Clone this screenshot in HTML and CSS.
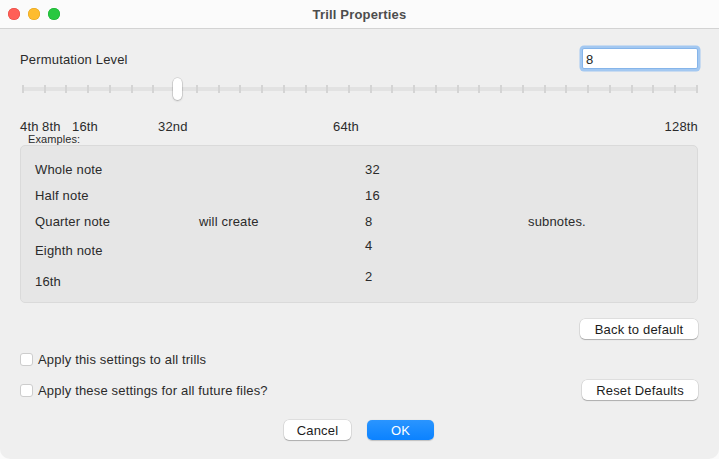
FILE: index.html
```html
<!DOCTYPE html>
<html lang="en">

<head>
    <meta charset="UTF-8">
    <meta name="viewport" content="width=device-width, initial-scale=1.0">
    <title>Trill Properties</title>
    <link rel="stylesheet" href="styles.css">
</head>

<body>
    <div class="window">
        <header class="titlebar">
            <div class="lights">
                <span class="light close"></span>
                <span class="light minimize"></span>
                <span class="light zoom"></span>
            </div>
            <h1 class="title">Trill Properties</h1>
            <div></div>
        </header>

        <main class="content">
            <div class="level-row">
                <span class="label">Permutation Level</span>
                <div class="level-input">8</div>
            </div>

            <!-- slider: 32 steps, value 8 -->
            <div class="slider">
                <div class="track">
                    <span class="tick"></span><span class="tick"></span><span class="tick"></span><span class="tick"></span>
                    <span class="tick"></span><span class="tick"></span><span class="tick"></span><span class="tick"></span>
                    <span class="tick"></span><span class="tick"></span><span class="tick"></span><span class="tick"></span>
                    <span class="tick"></span><span class="tick"></span><span class="tick"></span><span class="tick"></span>
                    <span class="tick"></span><span class="tick"></span><span class="tick"></span><span class="tick"></span>
                    <span class="tick"></span><span class="tick"></span><span class="tick"></span><span class="tick"></span>
                    <span class="tick"></span><span class="tick"></span><span class="tick"></span><span class="tick"></span>
                    <span class="tick"></span><span class="tick"></span><span class="tick"></span><span class="tick"></span>
                </div>
                <span class="thumb" style="left: 151px;"></span>
            </div>

            <div class="scale">
                <span style="left: 0;">4th</span>
                <span style="left: 22px;">8th</span>
                <span style="left: 52px;">16th</span>
                <span style="left: 138px;">32nd</span>
                <span style="left: 313px;">64th</span>
                <span class="scale-end">128th</span>
            </div>

            <div class="caption">Examples:</div>
            <section class="examples">
                <span class="name">Whole note</span><span></span><span class="count">32</span><span></span>
                <span class="name">Half note</span><span></span><span class="count">16</span><span></span>
                <span class="name">Quarter note</span><span>will create</span><span class="count">8</span><span>subnotes.</span>
                <span class="name">Eighth note</span><span></span><span class="count lifted">4</span><span></span>
                <span class="name">16th</span><span></span><span class="count lifted">2</span><span></span>
            </section>

            <div class="row end">
                <button class="btn wide">Back to default</button>
            </div>

            <div class="row first-check">
                <label class="check"><span class="box"></span>Apply this settings to all trills</label>
            </div>

            <div class="row between second-check">
                <label class="check"><span class="box"></span>Apply these settings for all future files?</label>
                <button class="btn reset">Reset Defaults</button>
            </div>

            <div class="actions">
                <button class="btn small">Cancel</button>
                <button class="btn small primary">OK</button>
            </div>
        </main>
    </div>
</body>

</html>
```

FILE: styles.css
```css
body {
    margin: 0;
    padding: 0;
    background: #fbfbfb;
    font-family: "Liberation Sans", Arial, sans-serif;
    font-size: 13px;
    letter-spacing: 0.17px;
    color: #2b2b2b;
}

.window {
    width: 719px;
    height: 459px;
    background: #efefef;
    border-radius: 0 0 10px 10px;
    overflow: hidden;
}

.titlebar {
    height: 28px;
    background: #fbfbfb;
    border-bottom: 1px solid #d3d3d3;
    display: grid;
    grid-template-columns: 1fr auto 1fr;
    align-items: center;
}

.lights {
    display: flex;
    gap: 8px;
    padding-left: 8px;
}

.light {
    width: 12px;
    height: 12px;
    border-radius: 50%;
}

.close { background: #ff5f57; box-shadow: inset 0 0 0 0.5px #e2463f; }
.minimize { background: #febc2e; box-shadow: inset 0 0 0 0.5px #e1a116; }
.zoom { background: #28c840; box-shadow: inset 0 0 0 0.5px #14ae2b; }

.title {
    margin: 0;
    font-size: 13px;
    font-weight: bold;
    color: #4d4d4d;
}

.content {
    padding: 19px 21px 0 20px;
}

.level-row {
    display: flex;
    justify-content: space-between;
    align-items: center;
}

.label {
    padding-top: 1px;
}

.level-input {
    box-sizing: border-box;
    width: 116px;
    height: 21px;
    padding: 2px 3px 0;
    line-height: 17px;
    background: #fff;
    border: 1px solid #86b5ea;
    box-shadow: 0 0 0 2.5px #a3c8f1;
    border-radius: 2px;
    color: #222;
}

.slider {
    position: relative;
    height: 22px;
    margin: 9px 0 0 2px;
}

.track {
    height: 22px;
    display: flex;
    justify-content: space-between;
    align-items: center;
    background: linear-gradient(#e2e2e2, #e2e2e2) center / 100% 4px no-repeat;
}

.tick {
    width: 2px;
    height: 8px;
    background: #d4d4d4;
}

.thumb {
    position: absolute;
    top: 0;
    width: 9px;
    height: 22px;
    background: #fff;
    border-radius: 5px;
    box-shadow: 0 0 0 0.5px rgba(0, 0, 0, 0.18), 0 1px 2px rgba(0, 0, 0, 0.2);
}

.scale {
    position: relative;
    height: 15px;
    line-height: 16px;
    margin-top: 19px;
}

.scale span {
    position: absolute;
    top: 0;
}

.scale .scale-end {
    right: 0;
}

.caption {
    font-size: 11px;
    line-height: 11px;
    margin-left: 8px;
    letter-spacing: 0.1px;
}

.examples {
    box-sizing: border-box;
    height: 158px;
    padding: 11px 0 0 14px;
    background: #e6e6e6;
    border: 1px solid #dadada;
    border-radius: 5px;
    display: grid;
    grid-template-columns: 164px 166px 163px 1fr;
    grid-template-rows: 26px 26px 26px 32px 30px;
    align-items: center;
    line-height: 16px;
}

.count.lifted {
    margin-bottom: 10px;
}

.row {
    display: flex;
    align-items: center;
    height: 20px;
}

.row.end {
    justify-content: flex-end;
    margin-top: 16px;
}

.row.between {
    justify-content: space-between;
}

.first-check {
    margin-top: 10px;
}

.second-check {
    margin-top: 11px;
}

.check {
    display: flex;
    align-items: center;
    gap: 5px;
}

.box {
    width: 13px;
    height: 13px;
    box-sizing: border-box;
    background: #fff;
    border: 1px solid #cdcdcd;
    border-radius: 3px;
}

.btn {
    font-family: inherit;
    font-size: 13px;
    letter-spacing: 0.17px;
    color: #1c1c1c;
    height: 20px;
    padding: 0;
    border: none;
    border-radius: 5px;
    background: #fff;
    box-shadow: 0 0 0 0.5px rgba(0, 0, 0, 0.14), 0 1px 1px rgba(0, 0, 0, 0.22);
}

.btn.wide { width: 118px; }
.btn.reset { width: 116px; }
.btn.small { width: 67px; }

.btn.primary {
    color: #fff;
    background: linear-gradient(#2a95ff, #0b82ff);
    box-shadow: 0 0.5px 1px rgba(0, 0, 0, 0.2);
}

.actions {
    display: flex;
    justify-content: center;
    gap: 16px;
    margin-top: 20px;
}
```
